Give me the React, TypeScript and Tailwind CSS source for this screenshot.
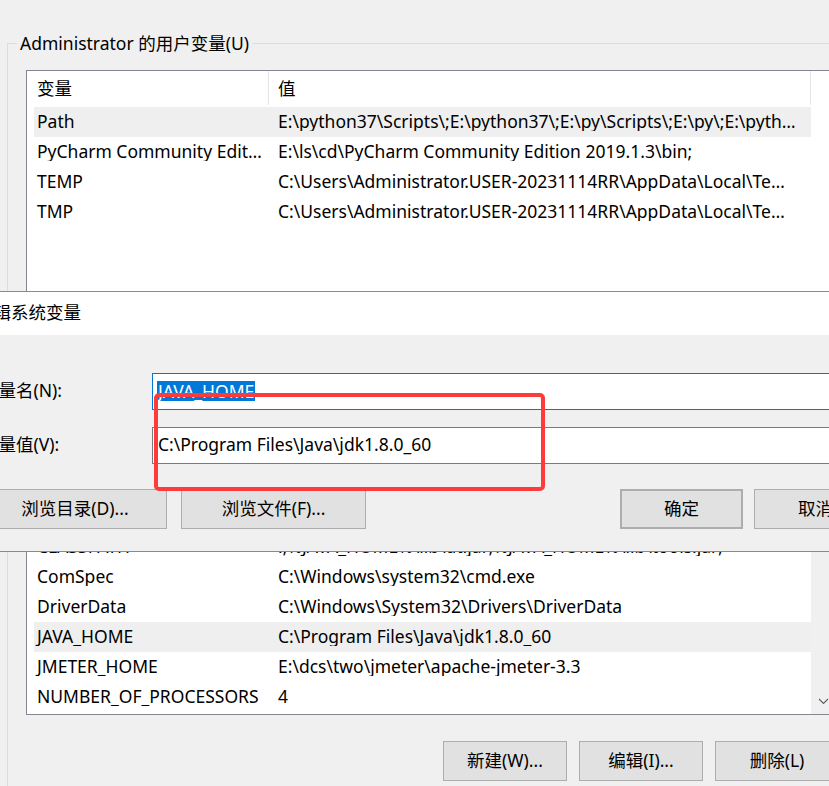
type Row = [string, string];

const userVars: Row[] = [
  ["Path", "E:\\python37\\Scripts\\;E:\\python37\\;E:\\py\\Scripts\\;E:\\py\\;E:\\python\\Scripts\\;E:\\python\\"],
  ["PyCharm Community Edition", "E:\\ls\\cd\\PyCharm Community Edition 2019.1.3\\bin;"],
  ["TEMP", "C:\\Users\\Administrator.USER-20231114RR\\AppData\\Local\\Temp"],
  ["TMP", "C:\\Users\\Administrator.USER-20231114RR\\AppData\\Local\\Temp"],
];

const sysVars: Row[] = [
  ["asl.log", "Destination=file"],
  ["CLASSPATH", ".;%JAVA_HOME%\\lib\\dt.jar;%JAVA_HOME%\\lib\\tools.jar;"],
  ["ComSpec", "C:\\Windows\\system32\\cmd.exe"],
  ["DriverData", "C:\\Windows\\System32\\Drivers\\DriverData"],
  ["JAVA_HOME", "C:\\Program Files\\Java\\jdk1.8.0_60"],
  ["JMETER_HOME", "E:\\dcs\\two\\jmeter\\apache-jmeter-3.3"],
  ["NUMBER_OF_PROCESSORS", "4"],
];

function VarList({
  rows,
  selected,
  scroll = false,
  className = "",
}: {
  rows: Row[];
  selected: number;
  scroll?: boolean;
  className?: string;
}) {
  return (
    <div className={`ml-[18px] flex w-[840px] overflow-hidden border border-[#828790] bg-white ${className}`}>
      <div className="w-[784px] shrink-0">
        <div className="flex h-[36px] pb-[2px]">
          <div className="flex w-[242px] items-center border-r border-[#e5e5e5] pl-[10px]">变量</div>
          <div className="flex w-[542px] items-center border-r border-[#e5e5e5] pl-[9px]">值</div>
        </div>
        {rows.map(([name, value], i) => (
          <div
            key={name}
            className={`ml-[7px] flex h-[30px] w-[777px] items-center pb-[2px] ${i === selected ? "bg-[#efefef]" : ""}`}
          >
            <div className="w-[234px] shrink-0 truncate pl-[3px] pr-[4px]">{name}</div>
            <div className="min-w-0 flex-1 truncate pl-[10px] pr-[13px]">{value}</div>
          </div>
        ))}
      </div>
      {scroll && (
        <div className="flex w-[25px] shrink-0 flex-col justify-end bg-[#f0f0f0]">
          <div className="flex h-[25px] items-center justify-center">
            <svg width="11" height="7" viewBox="0 0 11 7">
              <polyline points="1,1 5.5,5.5 10,1" fill="none" stroke="#606060" strokeWidth="1.2" />
            </svg>
          </div>
        </div>
      )}
    </div>
  );
}

function WinButton({ label, className = "" }: { label: string; className?: string }) {
  return (
    <div
      className={`flex h-[40px] shrink-0 items-center justify-center border border-[#adadad] bg-[#e1e1e1] pb-[3px] ${className}`}
    >
      {label}
    </div>
  );
}

function ListButtons({ className = "" }: { className?: string }) {
  return (
    <div className={`ml-[435px] flex gap-[12px] ${className}`}>
      <WinButton label="新建(W)..." className="w-[124px]" />
      <WinButton label="编辑(I)..." className="w-[124px]" />
      <WinButton label="删除(L)" className="w-[124px]" />
    </div>
  );
}

export default function App() {
  return (
    <div className="relative h-[786px] w-[829px] overflow-hidden bg-[#f0f0f0] font-['Noto_Sans','Noto_Sans_CJK_SC',sans-serif] text-[17.5px] leading-[20px] text-black">
      {/* 环境变量 main window */}
      <div className="pl-[7px] pt-[33px]">
        <fieldset className="w-[900px] border border-[#dcdcdc] pb-[11px]">
          <legend className="ml-[9px] px-[3px] leading-[20px]">Administrator 的用户变量(U)</legend>
          <VarList rows={userVars} selected={0} className="mt-[17px] h-[231px]" />
          <ListButtons className="mt-[11px]" />
        </fieldset>

        <fieldset className="mt-[67px] w-[900px] border border-[#dcdcdc] pb-[20px]">
          <legend className="ml-[9px] px-[3px] leading-[20px]">系统变量(S)</legend>
          <VarList rows={sysVars} selected={4} scroll className="mt-[14px] h-[250px]" />
          <ListButtons className="mt-[26px]" />
        </fieldset>
      </div>

      {/* 编辑系统变量 dialog */}
      <div className="absolute left-[-40px] top-[291px] flex h-[261px] w-[940px] flex-col border border-[#8a8a8a]">
        <div className="flex h-[43px] shrink-0 items-center bg-white pb-[3px] pl-[15px]">编辑系统变量</div>
        <div className="flex-1 bg-[#f0f0f0] pt-[38px]">
          <div className="flex items-center">
            <div className="w-[191px] shrink-0 pb-[3px] pl-[20px]">变量名(N):</div>
            <div className="flex h-[37px] flex-1 items-center border border-[#0078d7] bg-white pl-[4px]">
              <span className="mb-[1px] bg-[#0078d7] px-[1px] text-white">JAVA_HOME</span>
            </div>
          </div>
          <div className="mt-[17px] flex items-center">
            <div className="w-[191px] shrink-0 pb-[3px] pl-[20px]">变量值(V):</div>
            <div className="flex h-[37px] flex-1 items-center border border-[#7a7a7a] bg-white pb-[3px] pl-[4px]">
              <span className="px-[1px]">C:\Program Files\Java\jdk1.8.0_60</span>
            </div>
          </div>
          <div className="mt-[25px] flex">
            <WinButton label="浏览目录(D)..." className="ml-[22px] w-[184px]" />
            <WinButton label="浏览文件(F)..." className="ml-[14px] w-[185px]" />
            <WinButton label="确定" className="ml-[254px] w-[123px] border-2 border-[#0078d7]" />
            <WinButton label="取消" className="ml-[11px] w-[123px]" />
          </div>
        </div>
      </div>

      {/* red annotation */}
      <div className="absolute left-[154px] top-[393px] h-[98px] w-[391px] rounded-[5px] border-4 border-[#fe3b3b]" />
    </div>
  );
}
